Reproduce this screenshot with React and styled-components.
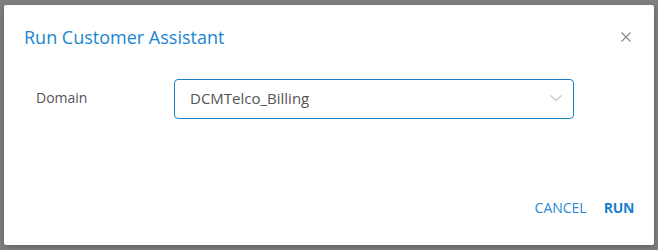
import styled, { createGlobalStyle } from 'styled-components';

const Global = createGlobalStyle`
  html, body {
    margin: 0;
    padding: 0;
    background: #7f7f7f;
  }
  body {
    font-family: "Open Sans", "Noto Sans", sans-serif;
  }
`;

const Backdrop = styled.div`
  width: 658px;
  height: 250px;
  box-sizing: border-box;
  padding: 5px 4px 5px 4px;
  background: #7f7f7f;
`;

const Dialog = styled.div`
  width: 650px;
  height: 240px;
  box-sizing: border-box;
  background: #fff;
  border-radius: 2px;
  box-shadow: 0 2px 6px rgba(0, 0, 0, 0.25);
  display: flex;
  flex-direction: column;
`;

const Header = styled.div`
  display: flex;
  align-items: center;
  justify-content: space-between;
  padding: 18px 22px 0 20px;
  height: 28px;
`;

const Title = styled.h2`
  margin: 0;
  font-size: 18px;
  font-weight: 400;
  color: #1a86cf;
  line-height: 28px;
`;

const Close = styled.button`
  border: none;
  background: none;
  padding: 0;
  width: 12px;
  height: 12px;
  display: flex;
  cursor: pointer;
`;

const Body = styled.div`
  flex: 1;
  padding: 28px 80px 0 32px;
`;

const Row = styled.div`
  display: flex;
  align-items: center;
`;

const Label = styled.label`
  width: 138px;
  font-size: 14px;
  color: #555;
  margin-top: -3px;
`;

const Select = styled.div`
  width: 400px;
  height: 40px;
  box-sizing: border-box;
  border: 1px solid #1a80c8;
  border-radius: 4px;
  display: flex;
  align-items: center;
  justify-content: space-between;
  padding: 0 10px 2px 15px;
  font-size: 15px;
  color: #555;
`;

const Footer = styled.div`
  display: flex;
  justify-content: flex-end;
  gap: 17px;
  padding: 0 20px 28px 0;
`;

const TextButton = styled.button`
  border: none;
  background: none;
  padding: 0;
  font-family: inherit;
  font-size: 14px;
  letter-spacing: ${(p) => (p.$primary ? '-0.3px' : '0')};
  font-weight: ${(p) => (p.$primary ? 700 : 400)};
  color: ${(p) => (p.$primary ? '#1a7fcc' : '#2a8ad6')};
  cursor: pointer;
`;

const App = () => {
  return (
    <>
      <Global />
      <Backdrop>
        <Dialog>
          <Header>
            <Title>Run Customer Assistant</Title>
            <Close aria-label="close">
              <svg width="12" height="12" viewBox="0 0 12 12">
                <path d="M1.5 1.5 L10.5 10.5 M10.5 1.5 L1.5 10.5" stroke="#8a8a8a" strokeWidth="1.2" fill="none" />
              </svg>
            </Close>
          </Header>
          <Body>
            <Row>
              <Label>Domain</Label>
              <Select>
                <span>DCMTelco_Billing</span>
                <svg width="14" height="8" viewBox="0 0 14 8">
                  <path d="M1.5 1.5 L7 6.5 L12.5 1.5" stroke="#c4c4c4" strokeWidth="1.2" fill="none" />
                </svg>
              </Select>
            </Row>
          </Body>
          <Footer>
            <TextButton>CANCEL</TextButton>
            <TextButton $primary>RUN</TextButton>
          </Footer>
        </Dialog>
      </Backdrop>
    </>
  );
};

export default App;
